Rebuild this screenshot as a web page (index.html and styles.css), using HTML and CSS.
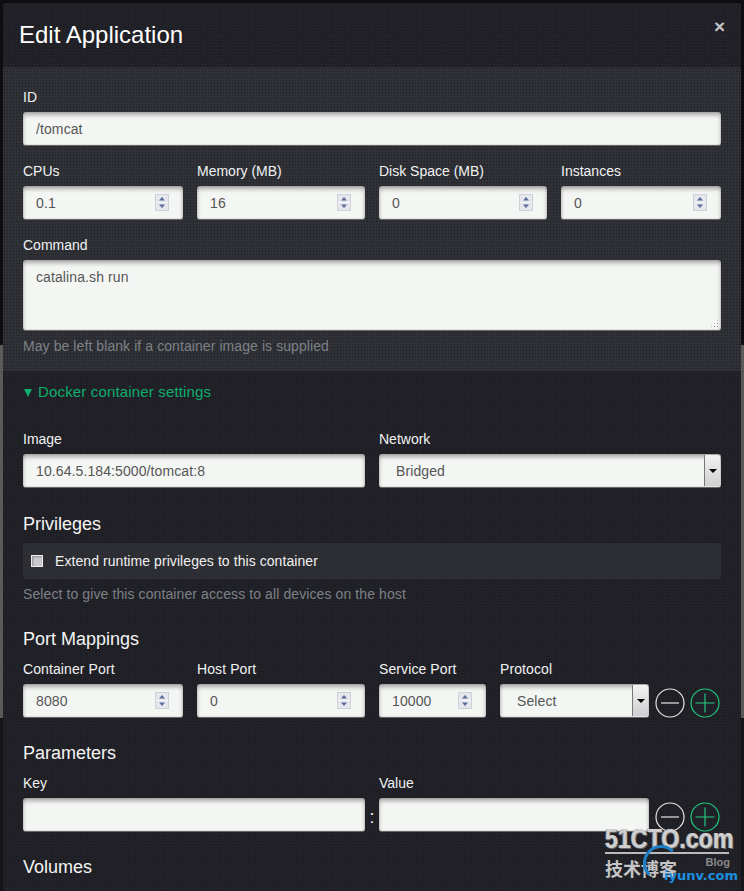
FILE: index.html
```html
<!DOCTYPE html>
<html lang="en">
<head>
<meta charset="utf-8">
<title>Edit Application</title>
<link rel="stylesheet" href="styles.css">
</head>
<body>
<svg class="defs" width="0" height="0">
  <symbol id="spin" viewBox="0 0 14 17">
    <rect x="0.5" y="0.5" width="13" height="16" fill="#f4f5f8" stroke="#cfd1d6"/>
    <rect x="1" y="1" width="12" height="7" fill="#e6e7ed"/>
    <rect x="1" y="9" width="12" height="7" fill="#e6e7ed"/>
    <path d="M7 3 10 6.5H4Z" fill="#5a6a9a"/>
    <path d="M7 14 10 10.5H4Z" fill="#5a6a9a"/>
  </symbol>
  <symbol id="minus" viewBox="0 0 30 30">
    <circle cx="15" cy="15" r="14" fill="none" stroke="#e4e4e4" stroke-width="1.2"/>
    <path d="M6 15H24" stroke="#e4e4e4" stroke-width="1.2"/>
  </symbol>
  <symbol id="plus" viewBox="0 0 30 30">
    <circle cx="15" cy="15" r="14" fill="none" stroke="#1ec97f" stroke-width="1.2"/>
    <path d="M5.5 15H24.5M15 5.5V24.5" stroke="#1ec97f" stroke-width="1.2"/>
  </symbol>
</svg>
<main class="modal">
  <header class="head">
    <h1 class="title">Edit Application</h1>
    <span class="close">×</span>
  </header>
  <section class="general">
    <div class="label">ID</div>
    <div class="input">/tomcat</div>
    <div class="row four">
      <div><div class="label">CPUs</div><div class="input num"><span>0.1</span><svg class="spin"><use href="#spin"/></svg></div></div>
      <div><div class="label">Memory (MB)</div><div class="input num"><span>16</span><svg class="spin"><use href="#spin"/></svg></div></div>
      <div><div class="label">Disk Space (MB)</div><div class="input num"><span>0</span><svg class="spin"><use href="#spin"/></svg></div></div>
      <div><div class="label">Instances</div><div class="input num"><span>0</span><svg class="spin"><use href="#spin"/></svg></div></div>
    </div>
    <div class="label cmd-label">Command</div>
    <div class="input area">catalina.sh run<i class="grip"></i></div>
    <p class="help cmd-help">May be left blank if a container image is supplied</p>
  </section>
  <section class="docker">
    <div class="toggle"><span class="tri"></span>Docker container settings</div>
    <div class="row two">
      <div><div class="label">Image</div><div class="input">10.64.5.184:5000/tomcat:8</div></div>
      <div><div class="label">Network</div><div class="input select"><span>Bridged</span><b class="arrow"></b></div></div>
    </div>
    <h2 class="sub priv">Privileges</h2>
    <div class="check"><i class="box"></i>Extend runtime privileges to this container</div>
    <p class="help">Select to give this container access to all devices on the host</p>
    <h2 class="sub ports">Port Mappings</h2>
    <div class="row portrow">
      <div><div class="label">Container Port</div><div class="input num"><span>8080</span><svg class="spin"><use href="#spin"/></svg></div></div>
      <div><div class="label">Host Port</div><div class="input num"><span>0</span><svg class="spin"><use href="#spin"/></svg></div></div>
      <div><div class="label">Service Port</div><div class="input num"><span>10000</span><svg class="spin"><use href="#spin"/></svg></div></div>
      <div><div class="label">Protocol</div><div class="input select"><span>Select</span><b class="arrow"></b></div></div>
      <div class="btns"><svg class="btn"><use href="#minus"/></svg><svg class="btn"><use href="#plus"/></svg></div>
    </div>
    <h2 class="sub params">Parameters</h2>
    <div class="row paramrow">
      <div><div class="label">Key</div><div class="input"></div></div>
      <div class="colon">:</div>
      <div><div class="label">Value</div><div class="input"></div></div>
      <div class="btns"><svg class="btn"><use href="#minus"/></svg><svg class="btn"><use href="#plus"/></svg></div>
    </div>
    <h2 class="sub vols">Volumes</h2>
  </section>
</main>
<div class="mark">
  <div class="mark-top">51CTO.com</div>
  <div class="mark-rule"></div>
  <div class="mark-cn">技术博客</div>
  <div class="mark-small">Blog</div>
  <div class="mark-ring"></div>
  <div class="mark-blue">iyunv.com</div>
</div>
</body>
</html>
```

FILE: styles.css
```css
* { box-sizing: border-box; }
html, body { margin: 0; height: 891px; overflow: hidden; }
body {
  position: relative;
  font: 14px/20px "Liberation Sans", Arial, sans-serif;
  color: #f2f2f2;
  background: linear-gradient(#0e0e10 0 345px, #5a5a5a 345px 718px, #161618 718px);
}
.defs { position: absolute; }
.modal {
  margin: 3px 3px 0;
  height: 888px;
  background: #202127;
  border-radius: 4px 4px 0 0;
  overflow: hidden;
}
.head {
  height: 64px;
  padding: 0 16px;
  display: flex;
  align-items: flex-start;
  justify-content: space-between;
  background-color: #1f2026;
  background-image: radial-gradient(rgba(110,30,40,.35) .6px, transparent .8px), radial-gradient(rgba(60,62,72,.3) .6px, transparent .8px);
  background-size: 7px 5px, 3px 3px;
}
.title { margin: 17px 0 0; font-size: 24px; line-height: 30px; font-weight: 400; color: #fff; }
.close { margin-top: 12px; font-size: 19px; line-height: 24px; font-weight: 700; color: #c4c6c8; }
.general {
  height: 304px;
  padding: 20px 20px 0;
  background-color: #2f3137;
  background-image: radial-gradient(#1d1e22 .5px, transparent .7px);
  background-size: 3px 3px;
}
.label { height: 20px; line-height: 20px; margin-bottom: 5px; color: #f0f2f2; }
.input {
  height: 34px;
  padding: 0 13px;
  display: flex;
  align-items: center;
  color: #555;
  letter-spacing: .1px;
  background: #f4f6f4;
  border-radius: 3px;
  border-bottom: 1px solid #666;
  box-shadow: inset 0 3px 4px rgba(0,0,0,.32), inset 0 0 1px rgba(0,0,0,.5);
}
.row { display: grid; column-gap: 14px; }
.four { grid-template-columns: 160px 168px 168px 160px; margin-top: 15px; }
.num { justify-content: space-between; padding-right: 14px; }
.spin { width: 14px; height: 17px; flex: none; }
.cmd-label { margin-top: 15px; }
.area { height: 71px; align-items: flex-start; padding-top: 7px; position: relative; }
.grip {
  position: absolute; right: 2px; bottom: 2px; width: 9px; height: 9px;
  background: radial-gradient(#8a8a8a .8px, transparent 1px) 0 0 / 3px 3px;
  clip-path: polygon(100% 0, 100% 100%, 0 100%);
}
.help { margin: 5px 0 0; height: 20px; line-height: 20px; color: #7d8186; letter-spacing: .1px; }
.cmd-help { letter-spacing: .08px; }
.docker {
  padding: 11px 20px 0;
  background-color: #1f2026;
  background-image: radial-gradient(rgba(110,30,40,.3) .6px, transparent .8px), radial-gradient(rgba(50,52,60,.4) .6px, transparent .8px);
  background-size: 7px 5px, 3px 3px;
  height: 520px;
}
.toggle { display: flex; align-items: center; color: #0dae6f; font-size: 15px; height: 20px; letter-spacing: .16px; }
.tri {
  width: 0; height: 0; margin: 2px 6px 0 1px;
  border: 4px solid transparent; border-top: 8px solid #0dae6f; border-bottom: 0;
}
.two { grid-template-columns: 342px 342px; margin-top: 27px; }
.select { padding: 0 1px 0 17px; justify-content: space-between; }
.arrow {
  align-self: stretch;
  width: 16px; margin: 1px 0;
  display: flex; align-items: center; justify-content: center;
  background: linear-gradient(#f2f2f2, #cfcfd2);
  border-left: 1px solid #777;
  border-radius: 0 2px 2px 0;
}
.arrow::before {
  content: ""; width: 0; height: 0;
  border: 4px solid transparent; border-top: 4px solid #000; border-bottom: 0;
}
.sub { margin: 0; font-size: 18px; line-height: 20px; font-weight: 400; color: #f4f4f4; }
.priv { margin-top: 26px; }
.check {
  margin-top: 9px; height: 36px; padding: 0 8px;
  display: flex; align-items: center; gap: 12px;
  background: #2c2e33; border-radius: 3px; color: #f0f0f0; letter-spacing: .07px;
}
.box {
  width: 12px; height: 12px; background: #c9c9cb; border: 1px solid #ededed; flex: none;
  box-shadow: inset 1px 1px 2px rgba(0,0,0,.3);
}
.ports { margin-top: 25px; }
.portrow { grid-template-columns: 160px 168px 107px 149px auto; margin-top: 10px; }
.portrow > div > .label { letter-spacing: .1px; }
.btns { display: flex; gap: 5px; align-self: end; margin-left: -8px; height: 30px; }
.btn { width: 30px; height: 30px; }
.params { margin-top: 25px; }
.paramrow { grid-template-columns: 342px 14px 270px auto; column-gap: 0; margin-top: 10px; }
.paramrow .btns { margin-left: 6px; }
.colon { align-self: end; height: 34px; line-height: 38px; font-size: 18px; text-align: center; }
.vols { margin-top: 25px; }
.mark { position: absolute; left: 605px; top: 825px; width: 139px; height: 66px; pointer-events: none; }
.mark-top {
  font: 700 28px/28px "Liberation Sans", sans-serif;
  color: #cfcfcf;
  text-shadow: 1px 1px 0 #6a6a6a, -1px 0 0 #9a9a9a;
  transform: scaleX(.83);
  transform-origin: left center;
  white-space: nowrap;
}
.mark-rule { width: 124px; height: 2px; background: #bbb; margin-top: -1px; }
.mark-cn { font: 700 18px/24px "Noto Sans CJK SC", sans-serif; color: #c4c4c4; margin-top: 2px; width: 80px; }
.mark-small { position: absolute; right: 14px; top: 31px; font: 700 11px/12px "Liberation Sans", sans-serif; color: #8a8a8a; }
.mark-ring {
  position: absolute; left: 38px; top: 20px; width: 36px; height: 36px;
  border: 3px solid #1f7fc4; border-right-color: transparent; border-bottom-color: transparent; border-radius: 50%;
}
.mark-blue { position: absolute; left: 59px; top: 42px; font: 700 13px/18px "DejaVu Sans", sans-serif; color: #1c8fe0; }
```
